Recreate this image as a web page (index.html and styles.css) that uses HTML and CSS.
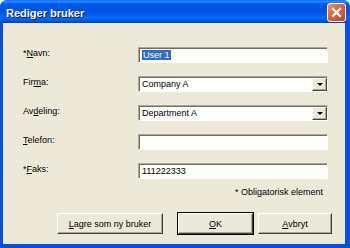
FILE: index.html
```html
<!DOCTYPE html>
<html lang="no">
<head>
  <meta charset="UTF-8" />
  <title>Rediger bruker</title>
  <link rel="stylesheet" href="styles.css">
</head>
<body>
  <div class="window">
    <div class="titlebar">
      <div class="title">Rediger bruker</div>
      <div class="close">
        <svg width="11" height="11" viewBox="0 0 11 11">
          <path d="M2 2 L9 9 M9 2 L2 9" stroke="#fff" stroke-width="2.4" stroke-linecap="square" />
        </svg>
      </div>
    </div>
    <div class="content">
      <div class="form">
        <div class="label">*<u>N</u>avn:</div>
        <div class="field"><span class="selected">User 1</span></div>

        <div class="label">Fir<u>m</u>a:</div>
        <div class="field combo"><span>Company A</span><span class="drop"></span></div>

        <div class="label">Av<u>d</u>eling:</div>
        <div class="field combo"><span>Department A</span><span class="drop"></span></div>

        <div class="label"><u>T</u>elefon:</div>
        <div class="field"></div>

        <div class="label">*<u>F</u>aks:</div>
        <div class="field">111222333</div>
      </div>
      <div class="note">* Obligatorisk element</div>
      <div class="buttons">
        <div class="btn btn-wide"><u>L</u>agre som ny bruker</div>
        <div class="btn btn-default"><u>O</u>K</div>
        <div class="btn"><u>A</u>vbryt</div>
      </div>
    </div>
  </div>
</body>
</html>
```

FILE: styles.css
```css
:root {
  --face: #ece9d8;
  --frame: #0a4fdc;
  --select: #316ac5;
}
* { box-sizing: border-box; }
html, body {
  margin: 0; padding: 0;
  background: #fff;
}
body {
  font-family: "Liberation Sans", Arial, sans-serif;
  font-size: 9px; color: #000;
}
u { text-decoration: underline; }

.window {
  width: 350px; height: 248px;
  display: flex; flex-direction: column;
  background: var(--frame);
  border-radius: 7px 7px 0 0;
}
.titlebar {
  height: 23px; flex: none;
  display: flex; justify-content: space-between; align-items: flex-start;
  padding: 0 4px 0 6px;
  border-radius: 7px 7px 0 0;
  background: linear-gradient(#0058ee 0%, #3a93ff 5%, #1580ff 9%, #0367f4 14%, #0057e5 22%,
    #0054e3 40%, #0056eb 58%, #005ff7 68%, #036bfe 76%, #0060ee 86%, #0050d2 94%, #003fae 100%);
}
.title {
  padding-top: 7px;
  line-height: 13px;
  font-size: 11px; font-weight: bold;
  color: #fff;
  text-shadow: 1px 1px 0 #0a1883;
}
.close {
  width: 19px; height: 19px;
  margin-top: 3px;
  display: flex; justify-content: center; align-items: center;
  border: 1px solid #fff;
  border-radius: 3px;
  background: linear-gradient(135deg, #f0926d 0%, #e0603a 45%, #c9431c 100%);
}

.content {
  flex: 1;
  margin: 0 5px 4px 3px;
  background: var(--face);
  padding: 24px 0 0 20px;
  display: flex; flex-direction: column;
}
.form {
  display: grid;
  grid-template-columns: 115px 190px;
  grid-auto-rows: 16px;
  row-gap: 13px;
}
.label {
  line-height: 11px;
  padding-top: 1px;
}
.field {
  background: #fffffb;
  border: 1px solid #fff;
  border-top-color: #aca899; border-left-color: #aca899;
  box-shadow: inset 1px 1px 0 #716f64;
  padding: 2px 3px 0 3px;
  line-height: 11px;
  white-space: nowrap;
}
.selected {
  background: var(--select);
  color: #fff;
  padding: 0 1px;
}
.combo { display: flex; justify-content: space-between; }
.drop {
  width: 15px; height: 13px;
  margin: -1px -3px 0 0;
  display: flex; justify-content: center; align-items: center;
  background: var(--face);
  border: 1px solid #404040;
  border-top-color: #fff; border-left-color: #fff;
  box-shadow: inset -1px -1px 0 #aca899;
}
.drop::after {
  content: "";
  border-left: 3px solid transparent;
  border-right: 3px solid transparent;
  border-top: 3px solid #000;
}

.note {
  margin-top: 8px;
  padding-right: 22px;
  text-align: right;
  line-height: 11px;
}
.buttons {
  margin-top: 15px;
  padding-right: 13px;
  display: flex; justify-content: flex-end;
}
.btn {
  width: 74px; height: 21px;
  display: flex; justify-content: center; align-items: center;
  background: var(--face);
  border: 1px solid #404040;
  border-top-color: #fff; border-left-color: #fff;
  box-shadow: inset -1px -1px 0 #aca899;
  margin-left: 5px;
}
.btn-wide { width: 106px; margin-left: 0; }
.btn-default {
  width: 75px;
  margin-left: 15px;
  outline: 1px solid #000;
  outline-offset: 0;
}
```
